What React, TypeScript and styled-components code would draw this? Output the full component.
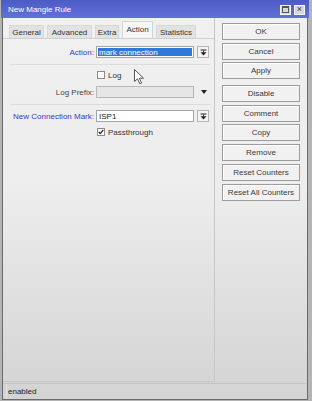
import React from 'react'
import styled, { createGlobalStyle } from 'styled-components'

const GlobalStyle = createGlobalStyle`
  html, body {
    margin: 0;
    padding: 0;
    background: #b4b4b4;
    font-family: "Liberation Sans", Arial, sans-serif;
    font-size: 8px;
    color: #333;
  }
`

const Window = styled.div`
  margin-left: 1px;
  width: 308px;
  height: 400px;
  display: flex;
  flex-direction: column;
`

const TitleBar = styled.div`
  height: 18px;
  flex-shrink: 0;
  background: linear-gradient(#4c5cc4, #6271d6);
  display: flex;
  align-items: center;
  padding: 1px 4px 0 7px;
  box-sizing: border-box;
  color: #fff;
  font-size: 8px;

  .title {
    flex: 1;
  }
`

const TitleButton = styled.span`
  width: 9px;
  height: 8px;
  margin-left: 3px;
  background: #d8d8d8;
  border: 1px solid #f4f4f4;
  display: flex;
  align-items: center;
  justify-content: center;
  color: #333;
  font-size: 9px;
  line-height: 1;

  &.max::after {
    content: '';
    width: 5px;
    height: 4px;
    border: 1px solid #555;
    border-top-width: 2px;
  }
`

const Body = styled.div`
  flex: 1;
  margin: 0 1px;
  border: 1px solid #6a6a6a;
  border-top: none;
  background: linear-gradient(#f0f0f0 0%, #ededed 45%, #d3d3d3 100%);
  display: flex;
  flex-direction: column;
`

const Main = styled.div`
  height: 365px;
  display: flex;
`

const LeftColumn = styled.div`
  width: 211px;
  height: 363px;
  display: flex;
  flex-direction: column;
  border-right: 1px solid #c6c6c6;
  border-bottom: 1px solid #c6c6c6;
`

const Tabs = styled.div`
  height: 20px;
  display: flex;
  align-items: flex-end;
  gap: 3px;
  padding-left: 6px;
  border-bottom: 1px solid #d0d0d0;
`

const Tab = styled.div<{ $w: number; $active?: boolean }>`
  width: ${p => p.$w}px;
  height: ${p => (p.$active ? 17 : 13)}px;
  box-sizing: border-box;
  display: flex;
  align-items: center;
  justify-content: center;
  padding-bottom: ${p => (p.$active ? 2 : 0)}px;
  background: ${p => (p.$active ? '#f6f6f6' : '#e2e2e2')};
  border: 1px solid ${p => (p.$active ? '#d4d4d4' : '#d8d8d8')};
  border-bottom: none;
  color: #333;
  white-space: nowrap;
`

const Panel = styled.div`
  position: relative;
  flex: 1;
  padding-top: 7px;
  display: flex;
  flex-direction: column;
`

const Row = styled.div<{ $mt?: number }>`
  height: 12px;
  margin-top: ${p => p.$mt ?? 0}px;
  display: grid;
  grid-template-columns: 91px 98px 12px;
  column-gap: 2px;
  align-items: center;
`

const Label = styled.div<{ $set?: boolean }>`
  text-align: right;
  color: ${p => (p.$set ? '#3838c8' : '#444')};
  white-space: nowrap;
`

const Field = styled.div<{ $disabled?: boolean; $selected?: boolean }>`
  height: 12px;
  box-sizing: border-box;
  border: 1px solid ${p => (p.$disabled ? '#b8b8b8' : '#a4a4a4')};
  background: ${p => (p.$disabled ? '#e6e6e6' : '#fff')};
  padding: 1px;
  display: flex;

  span {
    flex: 1;
    display: flex;
    align-items: center;
    padding-left: 1px;
    background: ${p => (p.$selected ? '#2f7ad8' : 'transparent')};
    color: ${p => (p.$selected ? '#fff' : '#222')};
  }
`

const DropButton = styled.div`
  width: 12px;
  height: 12px;
  margin-left: 1px;
  box-sizing: border-box;
  border: 1px solid #b4b4b4;
  background: #f4f4f4;
  display: flex;
  align-items: center;
  justify-content: center;
`

const Arrow = styled.div`
  display: flex;
  align-items: center;
  justify-content: center;
  padding-left: 3px;
`

const Separator = styled.div`
  height: 1px;
  margin: 6px 4px 0 8px;
  background: #dcdcdc;
`

const Check = styled.label`
  grid-column: 2 / 4;
  display: flex;
  align-items: center;
  gap: 3px;
  color: #333;
  padding-left: 1px;
`

const Box = styled.span`
  width: 8px;
  height: 8px;
  box-sizing: border-box;
  border: 1px solid #8c8c8c;
  background: #fff;
  display: flex;
  align-items: center;
  justify-content: center;
`

const Cursor = styled.svg`
  position: absolute;
  left: 131px;
  top: 30px;
`

const RightColumn = styled.div`
  flex: 1;
  display: flex;
  flex-direction: column;
  gap: 2.7px;
  padding: 5px 0 0 7px;
`

const Button = styled.div<{ $gapBefore?: boolean }>`
  width: 78px;
  height: 17px;
  box-sizing: border-box;
  margin-top: ${p => (p.$gapBefore ? 3 : 0)}px;
  border: 1px solid #9c9c9c;
  background: #f1f1f1;
  box-shadow: inset 1px 1px 0 #fff;
  display: flex;
  align-items: center;
  justify-content: center;
  color: #3a3a3a;
  white-space: nowrap;
`

const StatusBar = styled.div`
  height: 15px;
  margin: 0 1px 0 0;
  border-top: 1px solid #c4c4c4;
  display: flex;
  padding: 0 2px 0 3px;

  .field {
    flex: 1;
    display: flex;
    align-items: center;
    padding-left: 1px;
    border-left: 1px solid #e2e2e2;
    color: #222;
  }
`

const DropIcon = () => (
  <svg width="7" height="7" viewBox="0 0 7 7">
    <rect x="0.5" y="0.5" width="6" height="1" fill="#222" />
    <rect x="3" y="1.5" width="1" height="2" fill="#222" />
    <polygon points="0.5,3.2 6.5,3.2 3.5,6.5" fill="#222" />
  </svg>
)

const CheckMark = () => (
  <svg width="6" height="6" viewBox="0 0 6 6">
    <polyline points="0.8,3 2.3,4.6 5.2,1" fill="none" stroke="#222" strokeWidth="1.2" />
  </svg>
)

const tabs = [
  { name: 'General', w: 35 },
  { name: 'Advanced', w: 45 },
  { name: 'Extra', w: 24 },
  { name: 'Action', w: 31, active: true },
  { name: 'Statistics', w: 40 },
]

const buttons = [
  'OK', 'Cancel', 'Apply', 'Disable', 'Comment', 'Copy', 'Remove', 'Reset Counters', 'Reset All Counters',
]

const App = () => (
  <>
    <GlobalStyle />
    <Window>
      <TitleBar>
        <span className="title">New Mangle Rule</span>
        <TitleButton className="max" />
        <TitleButton>×</TitleButton>
      </TitleBar>
      <Body>
        <Main>
          <LeftColumn>
            <Tabs>
              {tabs.map(t => (
                <Tab key={t.name} $w={t.w} $active={t.active}>{t.name}</Tab>
              ))}
            </Tabs>
            <Panel>
              <Row>
                <Label $set>Action:</Label>
                <Field $selected><span>mark connection</span></Field>
                <DropButton><DropIcon /></DropButton>
              </Row>
              <Separator />
              <Row $mt={4}>
                <Check><Box /> Log</Check>
              </Row>
              <Row $mt={5}>
                <Label>Log Prefix:</Label>
                <Field $disabled><span /></Field>
                <Arrow>
                  <svg width="6" height="4" viewBox="0 0 6 4"><polygon points="0,0 6,0 3,4" fill="#222" /></svg>
                </Arrow>
              </Row>
              <Separator />
              <Row $mt={5}>
                <Label $set>New Connection Mark:</Label>
                <Field><span>ISP1</span></Field>
                <DropButton><DropIcon /></DropButton>
              </Row>
              <Row $mt={4}>
                <Check><Box><CheckMark /></Box> Passthrough</Check>
              </Row>
              <Cursor width="11" height="16" viewBox="0 0 11 16">
                <path d="M0.5,0.5 L0.5,12.5 L3.5,9.8 L5.8,14.8 L7.6,14 L5.4,9.2 L9.5,9.2 Z" fill="#fff" stroke="#555" strokeWidth="1" />
              </Cursor>
            </Panel>
          </LeftColumn>
          <RightColumn>
            {buttons.map(b => (
              <Button key={b} $gapBefore={b === 'Disable'}>{b}</Button>
            ))}
          </RightColumn>
        </Main>
        <StatusBar>
          <div className="field">enabled</div>
        </StatusBar>
      </Body>
    </Window>
  </>
)

export default App
